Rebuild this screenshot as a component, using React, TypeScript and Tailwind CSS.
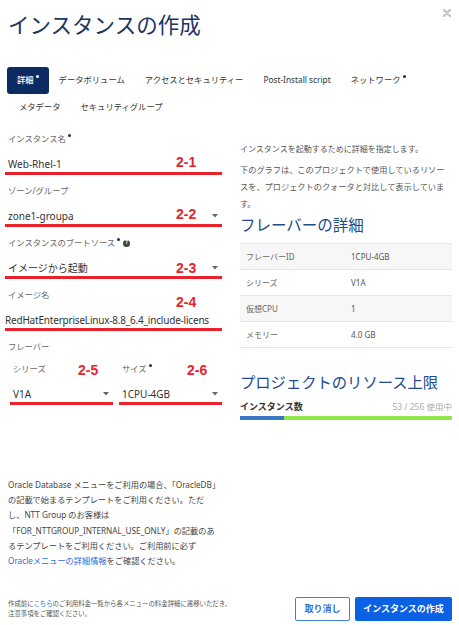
import type { ReactNode } from "react";

const font = "font-['Noto_Sans','Noto_Sans_CJK_JP',sans-serif]";

const Req = () => (
  <span className="relative -top-[4px] ml-[2px] inline-block h-[3px] w-[3px] rounded-full bg-[#1b2f5c]" />
);

const Caret = () => (
  <svg width="6" height="4" viewBox="0 0 6 4" className="shrink-0">
    <path d="M0 0h6L3 3.5z" fill="#666" />
  </svg>
);

const Tag = ({ children, className }: { children: ReactNode; className: string }) => (
  <span
    className={`absolute font-['Liberation_Sans',sans-serif] text-[14px] font-bold leading-[16px] text-[#e8232b] ${className}`}
  >
    {children}
  </span>
);

type FieldProps = {
  label: string;
  required?: boolean;
  help?: boolean;
  value: string;
  caret?: boolean;
  tag: string;
  tagClass: string;
  valueClass?: string;
};

function Field({ label, required, help, value, caret, tag, tagClass, valueClass }: FieldProps) {
  return (
    <div className="relative mb-[8px]">
      <div className="flex h-[16px] items-center text-[8.3px] leading-[16px] text-[#666]">
        {label}
        {required && <Req />}
        {help && (
          <span className="ml-[3px] flex h-[7px] w-[7px] items-center justify-center rounded-full bg-[#444] text-[5.5px] font-bold leading-none text-white">
            ?
          </span>
        )}
      </div>
      <div className="-ml-[3px] flex items-center border-b-[3px] border-[#e8232b] pb-[1px] pl-[3px] pr-[4px] pt-[10px]">
        <span className={`flex-1 overflow-hidden whitespace-nowrap text-[10px] leading-[14px] text-[#333] ${valueClass ?? ""}`}>
          {value}
        </span>
        {caret && <Caret />}
      </div>
      <Tag className={tagClass}>{tag}</Tag>
    </div>
  );
}

function SubField({ label, required, value, tag }: { label: string; required?: boolean; value: string; tag: string }) {
  return (
    <div className="relative">
      <div className="flex h-[16px] items-center pl-[3px] text-[8.3px] text-[#666]">
        {label}
        {required && <Req />}
      </div>
      <div className="flex items-center border-b-[3px] border-[#e8232b] pb-[1px] pl-[3px] pr-[4px] pt-[10px]">
        <span className="flex-1 text-[10px] leading-[14px] text-[#333]">{value}</span>
        <Caret />
      </div>
      <Tag className="left-[68px] top-[1px]">{tag}</Tag>
    </div>
  );
}

const tabs1 = ["データボリューム", "アクセスとセキュリティー", "Post-Install script"];

const flavor = [
  ["フレーバーID", "1CPU-4GB"],
  ["シリーズ", "V1A"],
  ["仮想CPU", "1"],
  ["メモリー", "4.0 GB"],
];

export default function App() {
  return (
    <div className={`flex h-[625px] w-[459px] flex-col bg-white text-[#333] ${font}`}>
      <div className="flex justify-between pl-[8px] pr-[8px] pt-[9px]">
        <h1 className="text-[21.5px] font-normal leading-[32px] text-[#1d3566]">インスタンスの作成</h1>
        <svg width="8" height="8" viewBox="0 0 8 8">
          <path d="M1 1l6 6M7 1L1 7" stroke="#c4c4c4" strokeWidth="2.2" strokeLinecap="round" />
        </svg>
      </div>

      <div className="mt-[26px] pl-[7px] text-[8.3px] text-[#333]">
        <div className="flex h-[27px] items-center">
          <div className="flex h-[27px] items-center rounded-[3px] bg-[#0c2b63] px-[10px] font-medium text-white">
            詳細
            <span className="relative -top-[4px] ml-[2px] inline-block h-[3px] w-[3px] rounded-full bg-white" />
          </div>
          {tabs1.map((t) => (
            <div key={t} className="flex h-[27px] items-center px-[10px]">
              {t}
            </div>
          ))}
          <div className="flex h-[27px] items-center px-[10px]">
            ネットワーク
            <Req />
          </div>
        </div>
        <div className="flex h-[27px] items-center pl-[2px]">
          <div className="px-[10px]">メタデータ</div>
          <div className="px-[10px]">セキュリティグループ</div>
        </div>
      </div>

      <div className="flex flex-1 pl-[8px] pr-[7px] pt-[10px]">
        <div className="w-[214px]">
          <Field label="インスタンス名" required value="Web-Rhel-1" tag="2-1" tagClass="left-[168px] top-[23px]" />
          <Field label="ゾーン/グループ" value="zone1-groupa" caret tag="2-2" tagClass="left-[168px] top-[23px]" />
          <Field
            label="インスタンスのブートソース"
            required
            help
            value="イメージから起動"
            caret
            tag="2-3"
            tagClass="left-[168px] top-[25px]"
          />
          <Field
            label="イメージ名"
            value="RedHatEnterpriseLinux-8.8_6.4_include-licens"
            tag="2-4"
            tagClass="left-[168px] top-[7px]"
            valueClass="-ml-[3px] tracking-[-0.2px]"
          />
          <div className="flex h-[16px] items-center text-[8.3px] text-[#666]">フレーバー</div>
          <div className="ml-[2px] mt-[6px] grid grid-cols-2 gap-[6px]">
            <SubField label="シリーズ" value="V1A" tag="2-5" />
            <SubField label="サイズ" required value="1CPU-4GB" tag="2-6" />
          </div>

          <div className="mt-[72px] whitespace-nowrap text-[8.2px] leading-[15.2px] text-[#444]">
            <div>Oracle Database メニューをご利用の場合、「OracleDB」</div>
            <div>の記載で始まるテンプレートをご利用ください。ただ</div>
            <div>し、NTT Group のお客様は</div>
            <div>「FOR_NTTGROUP_INTERNAL_USE_ONLY」の記載のあ</div>
            <div>るテンプレートをご利用ください。ご利用前に必ず</div>
            <div>
              <span className="text-[#2b6de0]">Oracleメニューの詳細情報</span>をご確認ください。
            </div>
          </div>
        </div>

        <div className="ml-[18px] flex-1">
          <p className="mt-[9px] text-[8px] leading-[17px] text-[#555]">インスタンスを起動するために詳細を指定します。</p>
          <p className="mt-[4px] text-[8.2px] leading-[17px] text-[#555]">
            下のグラフは、このプロジェクトで使用しているリソースを、プロジェクトのクォータと対比して表示しています。
          </p>
          <h2 className="mt-[3px] text-[15.5px] font-normal leading-[20px] text-[#234a8e]">フレーバーの詳細</h2>
          <div className="mt-[8px] border-b border-[#e6e6e6]">
            {flavor.map(([k, v], i) => (
              <div
                key={k}
                className={`flex h-[26px] items-center border-t border-[#e6e6e6] text-[8px] ${i % 2 === 0 ? "bg-[#f7f7f7]" : "bg-white"}`}
              >
                <span className="w-[111px] pl-[6px] text-[#666]">{k}</span>
                <span className="text-[#555]">{v}</span>
              </div>
            ))}
          </div>
          <h2 className="mt-[24px] text-[15.3px] font-normal leading-[20px] text-[#234a8e]">
            プロジェクトのリソース上限
          </h2>
          <div className="mt-[8px] flex h-[14px] items-center justify-between">
            <span className="text-[9px] font-bold text-[#333]">インスタンス数</span>
            <span className="text-[8.5px] text-[#aaa]">53 / 256 使用中</span>
          </div>
          <div className="mt-[2px] flex h-[4px] w-full bg-[#8ee84c]">
            <div className="h-full bg-[#3b78c3]" style={{ width: `${(53 / 256) * 100}%` }} />
          </div>
        </div>
      </div>

      <div className="flex items-center justify-between pb-[4px] pl-[8px] pr-[7px]">
        <div className="text-[6.4px] leading-[10px] text-[#555]">
          <div>
            作成前に<span className="text-[#2b6de0]">こちら</span>のご利用料金一覧から各メニューの料金詳細に遷移いただき、
          </div>
          <div>注意事項をご確認ください。</div>
        </div>
        <div className="flex">
          <button className="h-[24px] w-[55px] rounded-[2px] border border-[#3d7fe0] text-[9px] font-bold text-[#2f6fd6]">
            取り消し
          </button>
          <button className="ml-[5px] h-[24px] w-[97px] rounded-[2px] bg-[#0b61e3] text-[9px] font-bold text-white">
            インスタンスの作成
          </button>
        </div>
      </div>
    </div>
  );
}
